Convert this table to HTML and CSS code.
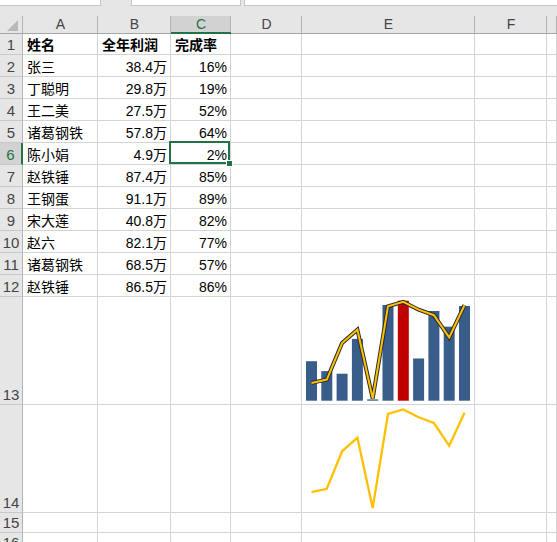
FILE: index.html
```html
<!DOCTYPE html>
<html lang="zh">
<head>
<meta charset="utf-8">
<title>Sheet</title>
<link rel="stylesheet" href="styles.css">
</head>
<body>
<div class="topbar">
  <div class="box box1"></div>
  <div class="box box2"></div>
  <div class="box box3"></div>
</div>
<div class="sheet">
  <div class="ch corner"><svg width="22" height="17" viewBox="0 0 22 17"><polygon points="18,4 18,15 7,15" fill="#b9b9b9"/></svg></div>
  <div class="ch">A</div><div class="ch">B</div><div class="ch ch-sel">C</div><div class="ch">D</div><div class="ch">E</div><div class="ch">F</div><div class="ch"></div>

  <div class="rh r1">1</div><div class="c bold">姓名</div><div class="c bold">全年利润</div><div class="c bold">完成率</div><div class="c"></div><div class="c"></div><div class="c"></div><div class="c"></div>
  <div class="rh">2</div><div class="c">张三</div><div class="c num">38.4万</div><div class="c num">16%</div><div class="c"></div><div class="c"></div><div class="c"></div><div class="c"></div>
  <div class="rh">3</div><div class="c">丁聪明</div><div class="c num">29.8万</div><div class="c num">19%</div><div class="c"></div><div class="c"></div><div class="c"></div><div class="c"></div>
  <div class="rh">4</div><div class="c">王二美</div><div class="c num">27.5万</div><div class="c num">52%</div><div class="c"></div><div class="c"></div><div class="c"></div><div class="c"></div>
  <div class="rh">5</div><div class="c">诸葛钢铁</div><div class="c num">57.8万</div><div class="c num">64%</div><div class="c"></div><div class="c"></div><div class="c"></div><div class="c"></div>
  <div class="rh rh-sel">6</div><div class="c">陈小娟</div><div class="c num">4.9万</div><div class="c num sel">2%</div><div class="c"></div><div class="c"></div><div class="c"></div><div class="c"></div>
  <div class="rh">7</div><div class="c">赵铁锤</div><div class="c num">87.4万</div><div class="c num">85%</div><div class="c"></div><div class="c"></div><div class="c"></div><div class="c"></div>
  <div class="rh">8</div><div class="c">王钢蛋</div><div class="c num">91.1万</div><div class="c num">89%</div><div class="c"></div><div class="c"></div><div class="c"></div><div class="c"></div>
  <div class="rh">9</div><div class="c">宋大莲</div><div class="c num">40.8万</div><div class="c num">82%</div><div class="c"></div><div class="c"></div><div class="c"></div><div class="c"></div>
  <div class="rh">10</div><div class="c">赵六</div><div class="c num">82.1万</div><div class="c num">77%</div><div class="c"></div><div class="c"></div><div class="c"></div><div class="c"></div>
  <div class="rh">11</div><div class="c">诸葛钢铁</div><div class="c num">68.5万</div><div class="c num">57%</div><div class="c"></div><div class="c"></div><div class="c"></div><div class="c"></div>
  <div class="rh">12</div><div class="c">赵铁锤</div><div class="c num">86.5万</div><div class="c num">86%</div><div class="c"></div><div class="c"></div><div class="c"></div><div class="c"></div>

  <div class="rh">13</div><div class="c"></div><div class="c"></div><div class="c"></div><div class="c"></div>
  <div class="c chart">
    <svg width="172" height="107" viewBox="0 0 172 107">
      <g fill="#385d8a">
        <rect x="4" y="64.2" width="11" height="39.5"/>
        <rect x="19.3" y="74.1" width="11" height="29.6"/>
        <rect x="34.6" y="76.7" width="11" height="27"/>
        <rect x="49.9" y="41.9" width="11" height="61.8"/>
        <rect x="65.2" y="102.4" width="11" height="1.3"/>
        <rect x="80.5" y="8" width="11" height="95.7"/>
        <rect x="95.8" y="3.7" width="11" height="100" fill="#c00000"/>
        <rect x="111.1" y="61.5" width="11" height="42.2"/>
        <rect x="126.4" y="14" width="11" height="89.7"/>
        <rect x="141.7" y="29.7" width="11" height="74"/>
        <rect x="157" y="9" width="11" height="94.7"/>
      </g>
      <polyline points="9.5,85.9 24.8,82.6 40.1,46 55.4,32.7 70.7,101.5 86,9.4 101.3,4.9 116.6,12.7 131.9,18.2 147.2,40.4 162.5,8.2" fill="none" stroke="#2b2b2b" stroke-width="4" stroke-linejoin="miter" stroke-miterlimit="3"/>
      <polyline points="9.5,85.9 24.8,82.6 40.1,46 55.4,32.7 70.7,101.5 86,9.4 101.3,4.9 116.6,12.7 131.9,18.2 147.2,40.4 162.5,8.2" fill="none" stroke="#ffc000" stroke-width="2" stroke-linejoin="miter" stroke-miterlimit="3"/>
    </svg>
  </div>
  <div class="c"></div><div class="c"></div>

  <div class="rh">14</div><div class="c"></div><div class="c"></div><div class="c"></div><div class="c"></div>
  <div class="c chart">
    <svg width="172" height="107" viewBox="0 0 172 107">
      <polyline points="9.5,87.2 24.8,83.8 40.1,46.3 55.4,32.7 70.7,103 86,8.9 101.3,4.4 116.6,12.3 131.9,18 147.2,40.7 162.5,7.8" fill="none" stroke="#ffc000" stroke-width="2.3" stroke-linejoin="miter" stroke-miterlimit="3"/>
    </svg>
  </div>
  <div class="c"></div><div class="c"></div>

  <div class="rh">15</div><div class="c"></div><div class="c"></div><div class="c"></div><div class="c"></div><div class="c"></div><div class="c"></div><div class="c"></div>
  <div class="rh">16</div><div class="c"></div><div class="c"></div><div class="c"></div><div class="c"></div><div class="c"></div><div class="c"></div><div class="c"></div>
</div>
</body>
</html>
```

FILE: styles.css
```css
html, body {
  margin: 0;
  padding: 0;
  background: #ffffff;
  overflow: hidden;
}
body {
  width: 557px;
  height: 542px;
  font-family: "Liberation Sans", "Noto Sans CJK SC", sans-serif;
}
.topbar {
  height: 16px;
  background: #e6e6e6;
  display: flex;
  align-items: flex-start;
}
.box {
  height: 5px;
  background: #ffffff;
  border-bottom: 1px solid #c6c6c6;
}
.box1 {
  width: 100px;
  border-right: 1px solid #c6c6c6;
}
.box2 {
  margin-left: 30px;
  width: 108px;
  border-left: 1px solid #c6c6c6;
  border-right: 1px solid #c6c6c6;
}
.box3 {
  margin-left: 3px;
  flex: 1;
  border-left: 1px solid #c6c6c6;
}
.sheet {
  display: grid;
  grid-template-columns: 23px 75px 73px 60px 71px 173px 72px 1fr;
  grid-template-rows: 18px 21px repeat(11, 22px) 108px 108px 20px 20px;
}
.sheet > div {
  box-sizing: border-box;
  min-width: 0;
}
.ch {
  background: #e6e6e6;
  border-bottom: 1px solid #a6a6a6;
  font-size: 14px;
  color: #444444;
  display: flex;
  align-items: center;
  justify-content: center;
  position: relative;
  line-height: 17px;
}
.ch::after {
  content: "";
  position: absolute;
  right: 0;
  top: 0;
  bottom: 0;
  width: 1px;
  background: #b3b3b3;
}
.corner {
  padding: 0;
  align-items: flex-start;
  justify-content: flex-start;
}
.corner svg {
  display: block;
}
.ch-sel {
  background: #d2d2d2;
  color: #217346;
  border-bottom: 2px solid #217346;
}
.rh {
  background: #e6e6e6;
  border-right: 1px solid #b3b3b3;
  border-bottom: 1px solid #c8c8c8;
  font-size: 15px;
  color: #444444;
  display: flex;
  align-items: flex-end;
  justify-content: center;
  line-height: 18px;
  padding-bottom: 0;
}
.rh-sel {
  background: #d2d2d2;
  color: #217346;
  border-right: 2px solid #217346;
}
.c {
  border-right: 1px solid #d4d4d4;
  border-bottom: 1px solid #d4d4d4;
  font-size: 14px;
  color: #000000;
  display: flex;
  align-items: flex-end;
  line-height: 18px;
  padding: 0 4px 0 4px;
  white-space: nowrap;
  position: relative;
}
.bold {
  font-weight: bold;
}
.num {
  justify-content: flex-end;
  padding-right: 3px;
}
.chart {
  padding: 0;
  align-items: flex-start;
}
.chart svg {
  display: block;
}
.sel {
  z-index: 2;
}
.sel::after {
  content: "";
  position: absolute;
  left: -2px;
  top: -2px;
  right: 0;
  bottom: 0;
  border: 2px solid #217346;
}
.sel::before {
  content: "";
  position: absolute;
  right: -3px;
  bottom: -3px;
  width: 5px;
  height: 5px;
  background: #217346;
  border: 1px solid #ffffff;
  z-index: 3;
}
```
